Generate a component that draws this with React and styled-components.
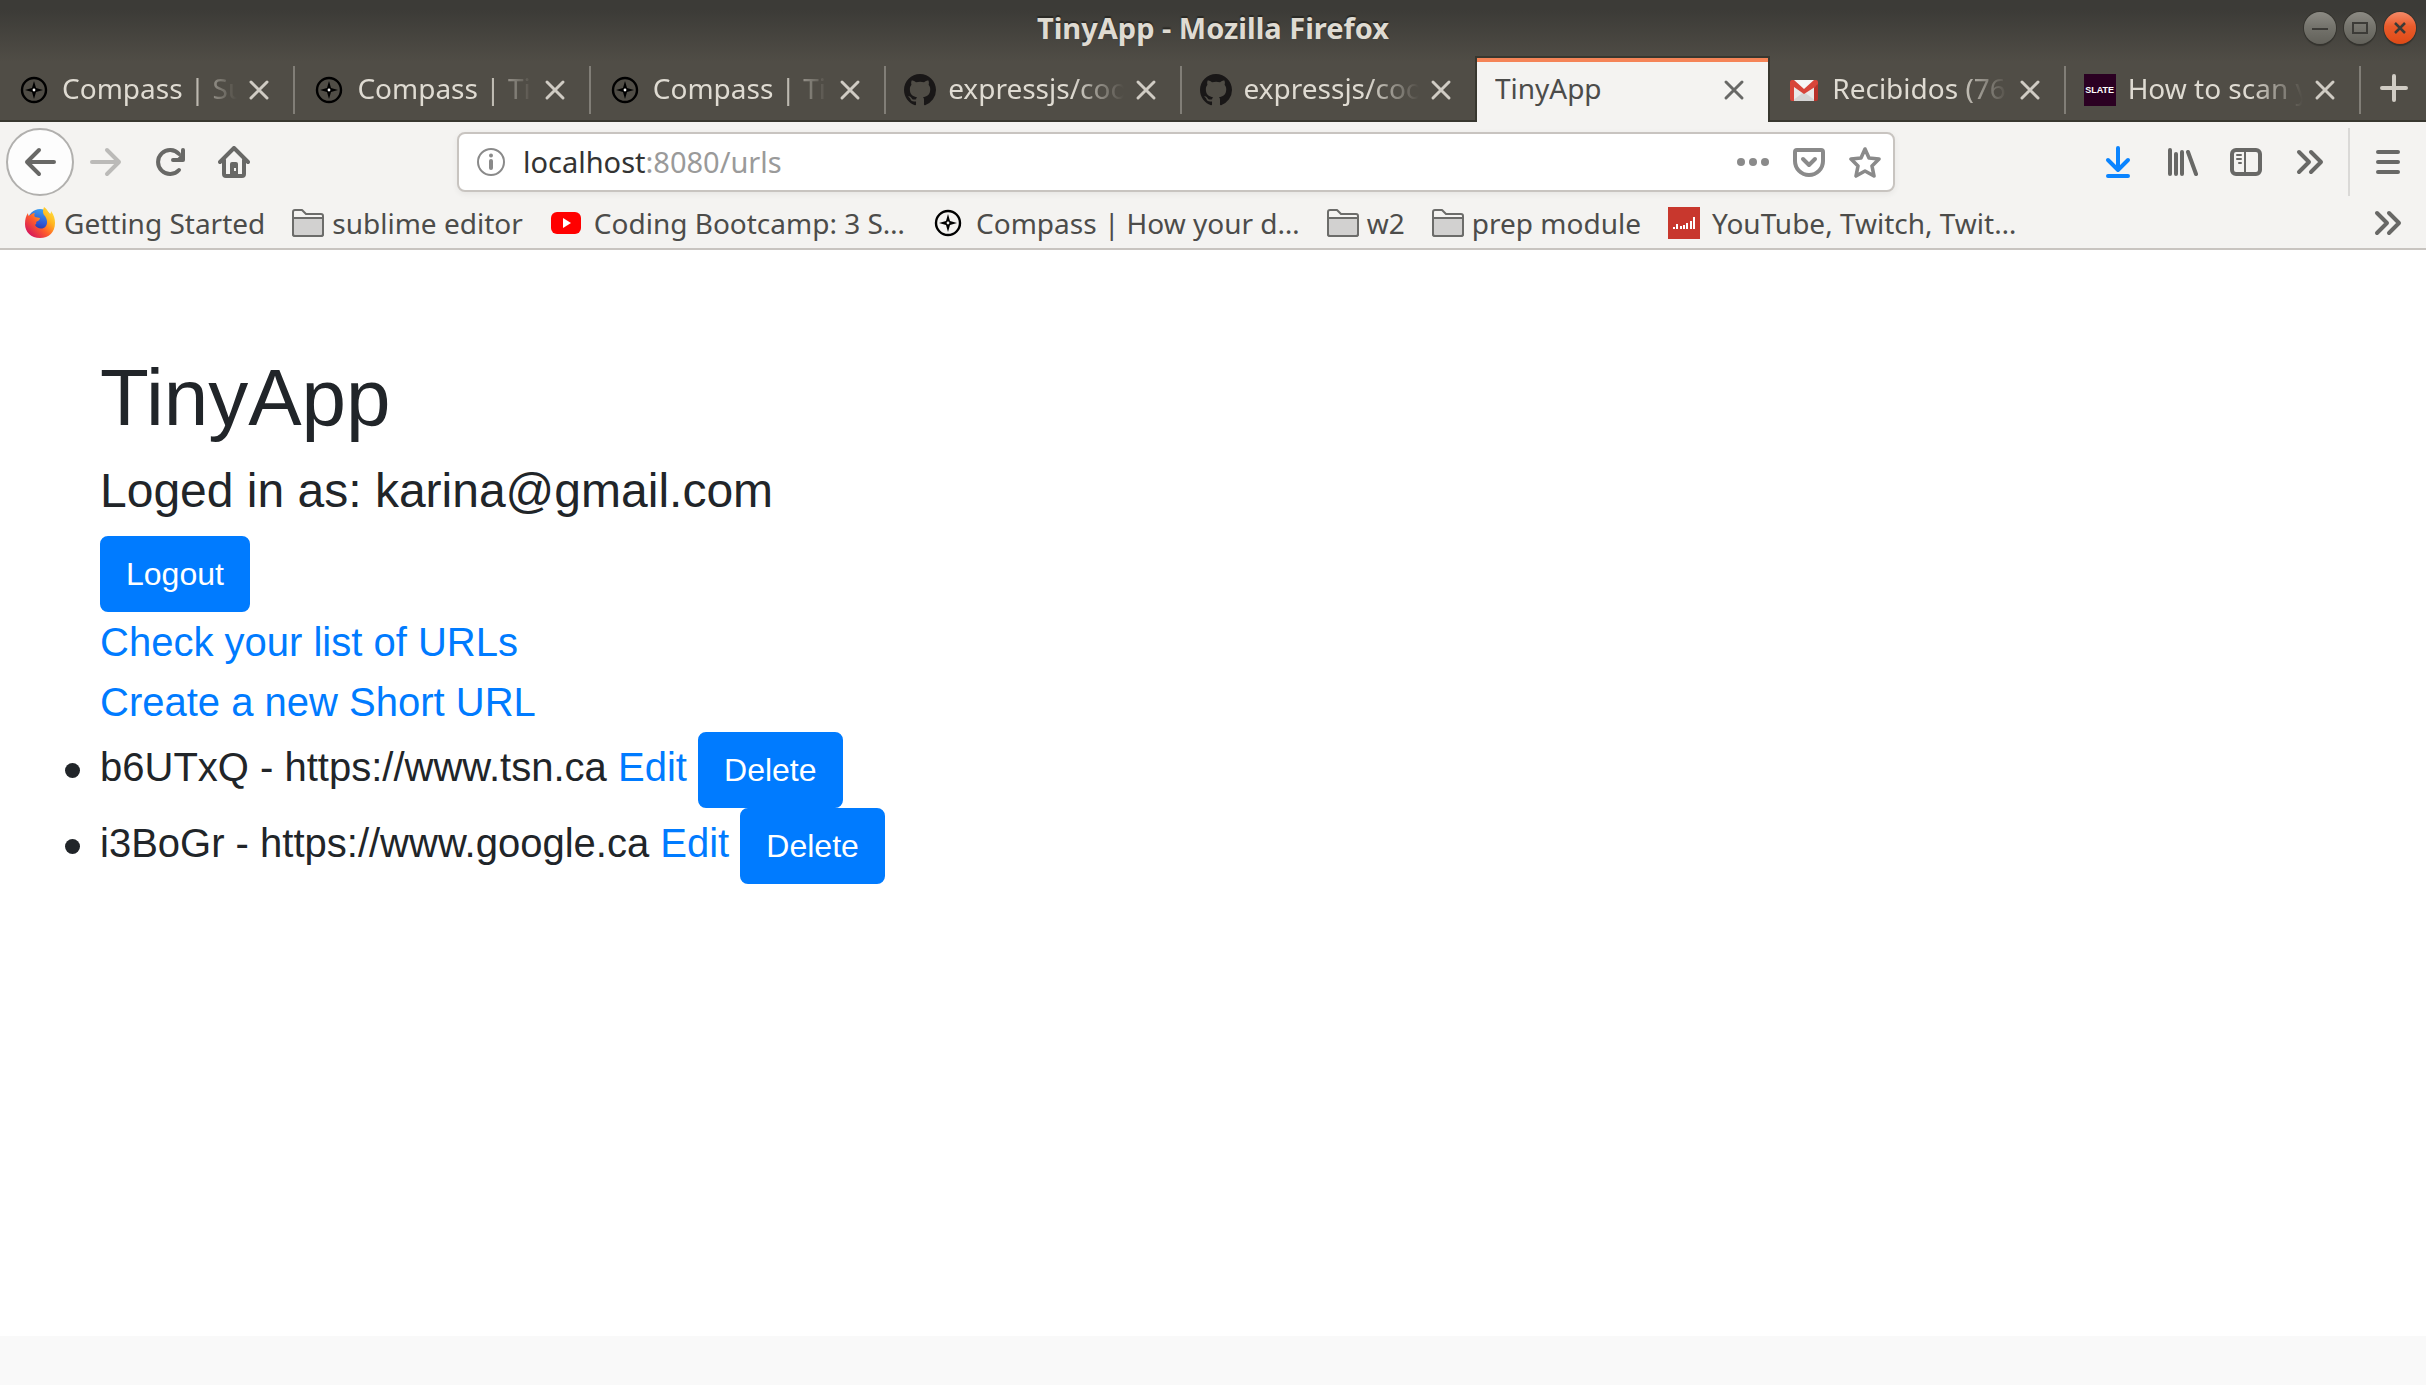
import React from "react";
import styled, { createGlobalStyle, css } from "styled-components";

const uiFont = '"Noto Sans", "Open Sans", sans-serif';
const pageFont = '"Liberation Sans", Arial, sans-serif';
const chrome = "#f4f3f1";
const frame = "#38372f";
const glyph = "#686866";
const blue = "#007bff";

const GlobalStyle = createGlobalStyle`
  *, *::before, *::after { box-sizing: border-box; }
  body { margin: 0; background: #fff; }
  button, input { font: inherit; color: inherit; margin: 0; padding: 0; border: 0; background: none; }
  button { cursor: pointer; }
`;

const Window = styled.div`
  min-height: 100vh;
  display: flex;
  flex-direction: column;
`;

/* ---------- window frame ---------- */

const Frame = styled.div`
  background: linear-gradient(to bottom, #3c3b37 0, #3c3b37 10px, #504d46 62px);
  color: #dfdbd2;
  font-family: ${uiFont};
`;

const TitleBar = styled.div`
  height: 56px;
  padding: 0 10px;
  display: grid;
  grid-template-columns: 1fr auto 1fr;
  align-items: center;
`;

const WindowTitle = styled.div`
  grid-column: 2;
  font-size: 29px;
  font-weight: 700;
  line-height: 40px;
  text-shadow: 0 -2px 1px #2a2925;
`;

const WindowButtons = styled.div`
  display: flex;
  justify-content: flex-end;
  gap: 8px;
`;

const WindowButton = styled.button`
  width: 32px;
  height: 32px;
  border-radius: 50%;
  color: #3c3b37;
  background: ${(p) =>
    p.$close
      ? "linear-gradient(#f58a68, #e95b2b 45%, #df4a16)"
      : "linear-gradient(#8d8b84, #75746d 45%, #62615a)"};
  box-shadow: 0 0 0 1px #35342f, 0 2px 1px #35342f;

  svg { display: block; }
`;

const TabStrip = styled.div`
  display: flex;
  height: 66px;
`;

const Tab = styled.div`
  flex: 1 1 100px;
  min-width: 0;
  display: flex;
  align-items: center;
  padding: 4px 0 0 18px;
  border-bottom: 2px solid ${frame};
  font-size: 28px;
  line-height: 40px;
  ${(p) =>
    p.$active &&
    css`
      position: relative;
      margin-left: -2px;
      padding: 0 0 0 18px;
      border: 2px solid ${frame};
      border-bottom: 0;
      background: linear-gradient(#f58457 4px, ${chrome} 4px);
      color: #4c4c4a;
    `}
`;

const TabIcon = styled.span`
  flex: none;
  width: 32px;
  height: 32px;
  margin-right: 12px;

  svg { display: block; }
`;

const TabLabel = styled.button`
  flex: 1 1 0;
  min-width: 0;
  margin-right: 6px;
  padding-bottom: 4px;
  overflow: hidden;
  text-align: left;
  white-space: nowrap;
  mask-image: ${(p) =>
    p.$fade ? "linear-gradient(to left, transparent, #000 52px)" : "none"};
`;

const TabClose = styled.button`
  flex: none;
  width: 32px;
  height: 32px;
  margin-right: 18px;
  color: ${(p) => (p.$active ? glyph : "#d0ccc4")};

  svg { display: block; }
`;

const TabDivider = styled.span`
  flex: none;
  width: 2px;
  height: 48px;
  background: ${(p) => (p.$hidden ? "transparent" : "#817e77")};
`;

const NewTab = styled.button`
  width: 65px;
  border-bottom: 2px solid ${frame};
  color: #d0ccc4;
  display: grid;
  place-items: center;
`;

const SlateMark = styled.span`
  display: grid;
  place-items: center;
  width: 32px;
  height: 32px;
  background: #2b0022;
  color: #fff;
  font: 700 9px/32px ${pageFont};
`;

/* ---------- toolbars ---------- */

const NavBar = styled.div`
  display: flex;
  align-items: center;
  height: 80px;
  padding-left: 6px;
  background: ${chrome};
  color: ${glyph};
  font-family: ${uiFont};
`;

const ToolButton = styled.button`
  flex: none;
  width: 64px;
  height: 68px;
  display: grid;
  place-items: center;
  color: ${(p) => p.$tint || "inherit"};
`;

const BackButton = styled(ToolButton)`
  width: 68px;
  border: 2px solid #b1b0ae;
  border-radius: 50%;
  background: #fdfdfd;
`;

const MenuButton = styled(ToolButton)`
  width: 78px;
  margin-left: 6px;
  border-left: 2px solid #dad9d7;
`;

const Spacer = styled.span`
  flex: 191 1 191px;
`;

const AddressBar = styled.div`
  flex: 1438 1 1438px;
  min-width: 0;
  height: 60px;
  display: flex;
  align-items: center;
  padding: 0 12px 0 16px;
  border: 2px solid #c8c4c0;
  border-radius: 8px;
  background: #fff;
  box-shadow: 0 2px 6px rgba(0, 0, 0, 0.06);
  color: #8a8a8a;
  font-size: 29px;
  line-height: 40px;

  > svg { flex: none; margin-right: 16px; }
`;

const HostInput = styled.input`
  field-sizing: content;
  height: 40px;
  color: #333;
  outline: none;
`;

const UrlPath = styled.span`
  flex: 1;
  color: #9a9a9a;
`;

const PageActions = styled.div`
  display: flex;
  gap: 24px;

  button { display: block; width: 32px; height: 32px; }
  svg { display: block; }
`;

const BookmarksBar = styled.nav`
  display: flex;
  align-items: center;
  height: 48px;
  padding: 0 22px 4px 24px;
  gap: 27px;
  border-bottom: 2px solid #c8c4c0;
  background: ${chrome};
  color: #4c4c4a;
  font-family: ${uiFont};
  font-size: 28px;
  line-height: 40px;
`;

const Bookmark = styled.a`
  display: flex;
  align-items: center;
  gap: ${(p) => (p.$tight ? 8 : 12)}px;
  color: inherit;
  text-decoration: none;
  white-space: nowrap;

  svg { flex: none; }
`;

const BookmarksOverflow = styled.button`
  margin-left: auto;
  color: ${glyph};

  svg { display: block; }
`;

/* ---------- page ---------- */

const Page = styled.main`
  flex: 1;
  padding: 100px;
  background: #fff;
  color: #212529;
  font-family: ${pageFont};
  font-size: 40px;
  line-height: 60px;
`;

const Heading = styled.h1`
  margin: 0 0 16px;
  font-size: 80px;
  font-weight: 400;
  line-height: 96px;
`;

const Account = styled.h4`
  margin: 0 0 16px;
  font-size: 48px;
  font-weight: 400;
  line-height: 58px;
`;

const Button = styled.button`
  padding: 12px 24px;
  border: 2px solid ${blue};
  border-radius: 8px;
  background: ${blue};
  color: #fff;
  font-size: 32px;
  line-height: 48px;
  vertical-align: middle;
`;

const LogoutForm = styled.form`
  display: flex;
`;

const Link = styled.a`
  color: ${blue};
  text-decoration: none;
`;

const PageLink = styled(Link)`
  display: block;
  width: fit-content;
`;

const UrlList = styled.ul`
  margin: 0;
  padding: 0;
  list-style: none;
`;

const UrlItem = styled.li`
  &::before {
    content: "";
    display: inline-block;
    width: 15px;
    height: 15px;
    margin: 0 20px 0 -35px;
    border-radius: 50%;
    background: currentColor;
    vertical-align: middle;
  }
`;

const Footer = styled.footer`
  height: 49px;
  background: #f9f9f9;
`;

/* ---------- icons ---------- */

const Icon = ({ children, size = 32, ...rest }) => (
  <svg
    width={size}
    height={size}
    viewBox="0 0 32 32"
    fill="none"
    stroke="currentColor"
    strokeWidth="4"
    strokeLinecap="round"
    strokeLinejoin="round"
    aria-hidden="true"
    {...rest}
  >
    {children}
  </svg>
);

const CloseIcon = () => (
  <Icon strokeWidth="3">
    <path d="M8 8 24 24M24 8 8 24" />
  </Icon>
);

const ChevronsIcon = () => (
  <Icon>
    <path d="M5 6 15 16 5 26M17 6 27 16 17 26" />
  </Icon>
);

const CompassIcon = () => (
  <Icon strokeWidth="2.4" stroke="#000">
    <circle cx="16" cy="16" r="12" />
    <path
      d="M16 7 18 14 25 16 18 18 16 25 14 18 7 16 14 14Z"
      fill="#000"
      stroke="none"
    />
    <circle cx="16" cy="16" r="1.4" fill="#f4f3f1" stroke="none" />
  </Icon>
);

const GithubIcon = () => (
  <svg width="32" height="32" viewBox="0 0 16 16" aria-hidden="true">
    <path
      fill="#191717"
      d="M8 0C3.58 0 0 3.58 0 8c0 3.54 2.29 6.53 5.47 7.59.4.07.55-.17.55-.38 0-.19-.01-.82-.01-1.49-2.01.37-2.53-.49-2.69-.94-.09-.23-.48-.94-.82-1.13-.28-.15-.68-.52-.01-.53.63-.01 1.08.58 1.23.82.72 1.21 1.87.87 2.33.66.07-.52.28-.87.51-1.07-1.78-.2-3.64-.89-3.64-3.95 0-.87.31-1.59.82-2.15-.08-.2-.36-1.02.08-2.12 0 0 .67-.21 2.2.82.64-.18 1.32-.27 2-.27s1.36.09 2 .27c1.53-1.04 2.2-.82 2.2-.82.44 1.1.16 1.92.08 2.12.51.56.82 1.27.82 2.15 0 3.07-1.87 3.75-3.65 3.95.29.25.54.73.54 1.48 0 1.07-.01 1.93-.01 2.2 0 .21.15.46.55.38A8.01 8.01 0 0 0 16 8c0-4.42-3.58-8-8-8z"
    />
  </svg>
);

const GmailIcon = () => (
  <svg width="32" height="32" viewBox="0 0 32 32" aria-hidden="true">
    <path fill="#e9e9e9" d="M4 6h24v21H4z" />
    <path fill="#d5d5d5" d="M16 18 28 27H4z" />
    <path fill="#f6f6f6" d="M6 6h20L16 15z" />
    <path
      fill="#d8453a"
      d="M2 8a2 2 0 0 1 2-2h2l10 9 10-9h2a2 2 0 0 1 2 2v3L16 20 6 13v14H4a2 2 0 0 1-2-2z"
    />
    <path fill="#b8322a" d="M26 13.500 30 10v15a2 2 0 0 1-2 2h-2z" />
  </svg>
);

const FolderIcon = () => (
  <Icon strokeWidth="2" stroke="#6c6c6a">
    <path
      fill="#f4f3f1"
      d="M1 5a2 2 0 0 1 2-2h7l4 4h15a2 2 0 0 1 2 2v18a2 2 0 0 1-2 2H3a2 2 0 0 1-2-2z"
    />
    <path fill="#d2d1d0" d="M1 11h30v16a2 2 0 0 1-2 2H3a2 2 0 0 1-2-2z" />
  </Icon>
);

const FirefoxIcon = () => (
  <svg width="32" height="32" viewBox="0 0 32 32" aria-hidden="true">
    <defs>
      <linearGradient id="fox" x1="1" y1="0" x2="0.1" y2="0.9">
        <stop offset="0" stopColor="#fff24a" />
        <stop offset="0.35" stopColor="#ffb520" />
        <stop offset="0.62" stopColor="#ff5d2b" />
        <stop offset="1" stopColor="#d3125f" />
      </linearGradient>
      <linearGradient id="globe" x1="0.7" y1="0" x2="0.4" y2="1">
        <stop offset="0" stopColor="#3da6f2" />
        <stop offset="0.6" stopColor="#2f55d4" />
        <stop offset="1" stopColor="#2b2a86" />
      </linearGradient>
    </defs>
    <circle cx="16" cy="14" r="12" fill="url(#globe)" />
    <path
      fill="url(#fox)"
      d="M20 0c4 3 4 5 6 7 1-1 1-2 1-3 3 4 4 8 4 12 0 9-6 15-15 15S1 25 1 17c0-5 1-8 3-11 0 1 0 2 1 3 2-2 4-3 6-3-1 1-1 3 0 4l5 1c0 2-2 3-4 4 1 1 0 2-1 3 2 4 8 5 11 1 2-3 1-7-1-10-3-3-2-6-1-9z"
    />
  </svg>
);

const YoutubeIcon = () => (
  <svg width="32" height="32" viewBox="0 0 32 32" aria-hidden="true">
    <rect x="1" y="5" width="30" height="22" rx="6" fill="#f00" />
    <path fill="#fff" d="m13 11 8 5-8 5z" />
  </svg>
);

const StatsIcon = () => (
  <svg width="32" height="32" viewBox="0 0 32 32" aria-hidden="true">
    <path fill="#c8372d" d="M0 0h32v32H0z" />
    <path
      stroke="#fff"
      strokeWidth="2"
      d="M6 22v-2M9 22v-5M13 22v-3M16 22v-4M19 22v-6M23 22v-8M26 22V10"
    />
  </svg>
);

/* ---------- data ---------- */

const tabs = [
  { title: "Compass | Su", icon: <CompassIcon /> },
  { title: "Compass | Tin", icon: <CompassIcon /> },
  { title: "Compass | Tin", icon: <CompassIcon /> },
  { title: "expressjs/coo", icon: <GithubIcon /> },
  { title: "expressjs/coo", icon: <GithubIcon />, beforeActive: true },
  { title: "TinyApp", active: true },
  { title: "Recibidos (76", icon: <GmailIcon /> },
  { title: "How to scan y", icon: <SlateMark>SLATE</SlateMark> },
];

const bookmarks = [
  { title: "Getting Started", icon: <FirefoxIcon />, tight: true },
  { title: "sublime editor", icon: <FolderIcon />, tight: true },
  { title: "Coding Bootcamp: 3 S…", icon: <YoutubeIcon /> },
  { title: "Compass | How your d…", icon: <CompassIcon /> },
  { title: "w2", icon: <FolderIcon />, tight: true },
  { title: "prep module", icon: <FolderIcon />, tight: true },
  { title: "YouTube, Twitch, Twit…", icon: <StatsIcon /> },
];

const urls = [
  { id: "b6UTxQ", target: "https://www.tsn.ca" },
  { id: "i3BoGr", target: "https://www.google.ca" },
];

export default function App() {
  return (
    <Window>
      <GlobalStyle />
      <Frame>
        <TitleBar>
          <WindowTitle>TinyApp - Mozilla Firefox</WindowTitle>
          <WindowButtons>
            <WindowButton aria-label="Minimize">
              <Icon strokeWidth="2" strokeLinecap="butt">
                <path d="M8 17h16" />
              </Icon>
            </WindowButton>
            <WindowButton aria-label="Maximize">
              <Icon strokeWidth="2" strokeLinejoin="miter">
                <path d="M9 11h14v10H9z" />
              </Icon>
            </WindowButton>
            <WindowButton $close aria-label="Close window">
              <Icon strokeWidth="2.500" strokeLinecap="butt">
                <path d="m11 11 10 10M21 11 11 21" />
              </Icon>
            </WindowButton>
          </WindowButtons>
        </TitleBar>
        <TabStrip>
          {tabs.map((tab, i) => (
            <Tab key={i} $active={tab.active}>
              {tab.icon && <TabIcon>{tab.icon}</TabIcon>}
              <TabLabel $fade={!tab.active}>{tab.title}</TabLabel>
              <TabClose $active={tab.active} aria-label="Close tab">
                <CloseIcon />
              </TabClose>
              {!tab.active && <TabDivider $hidden={tab.beforeActive} />}
            </Tab>
          ))}
          <NewTab aria-label="New tab">
            <Icon>
              <path d="M16 4v24M4 16h24" />
            </Icon>
          </NewTab>
        </TabStrip>
      </Frame>

      <NavBar>
        <BackButton aria-label="Back">
          <Icon>
            <path d="M30 16H3M15 4 3 16l12 12" />
          </Icon>
        </BackButton>
        <ToolButton $tint="#bbbab8" aria-label="Forward">
          <Icon>
            <path d="M2 16h27M17 4l12 12-12 12" />
          </Icon>
        </ToolButton>
        <ToolButton aria-label="Reload">
          <Icon>
            <path d="M25 24A12 12 0 1 1 25 8" />
            <path d="M29 4v10H19" />
            <path d="m29 6-7 8h7z" fill="currentColor" stroke="none" />
          </Icon>
        </ToolButton>
        <ToolButton aria-label="Home">
          <Icon>
            <path d="M2 16 16 2l14 14" />
            <path d="M6 14v14a2 2 0 0 0 2 2h16a2 2 0 0 0 2-2V14" />
            <path
              d="M12 30V18a2 2 0 0 1 2-2h4a2 2 0 0 1 2 2v12z"
              fill="currentColor"
              stroke="none"
            />
            <path d="M16 22h2v3h-2z" fill="#f4f3f1" stroke="none" />
          </Icon>
        </ToolButton>
        <Spacer />
        <AddressBar>
          <Icon strokeWidth="2">
            <circle cx="16" cy="16" r="13" />
            <path d="M16 15v7" strokeWidth="4" />
            <path d="M16 9.500v0" strokeWidth="4" />
          </Icon>
          <HostInput aria-label="Address" defaultValue="localhost" />
          <UrlPath>:8080/urls</UrlPath>
          <PageActions>
            <button aria-label="Page actions">
              <Icon fill="currentColor" stroke="none">
                <circle cx="4" cy="16" r="4" />
                <circle cx="16" cy="16" r="4" />
                <circle cx="28" cy="16" r="4" />
              </Icon>
            </button>
            <button aria-label="Save to Pocket">
              <Icon>
                <path d="M4 4h24a2 2 0 0 1 2 2v9a14 14 0 0 1-28 0V6a2 2 0 0 1 2-2z" />
                <path d="m10 13 6 6 6-6" />
              </Icon>
            </button>
            <button aria-label="Bookmark this page">
              <Icon strokeWidth="3.600">
                <path d="m16 3 4 9 10 1-7 7 2 10-9-5-9 5 2-10-7-7 10-1z" />
              </Icon>
            </button>
          </PageActions>
        </AddressBar>
        <Spacer />
        <ToolButton $tint="#0a84ff" aria-label="Downloads">
          <Icon>
            <path d="M16 2v22M6 14l10 10 10-10M6 30h20" />
          </Icon>
        </ToolButton>
        <ToolButton aria-label="Library">
          <Icon>
            <path d="M4 4v24M10 8v20M16 6v22M22 6l8 22" />
          </Icon>
        </ToolButton>
        <ToolButton aria-label="Sidebars">
          <Icon>
            <rect x="2" y="4" width="28" height="24" rx="4" />
            <path d="M15 4v24" strokeWidth="2" />
            <path d="M7 9h4M7 13h4M9 17h2" strokeWidth="2" />
          </Icon>
        </ToolButton>
        <ToolButton aria-label="More tools">
          <ChevronsIcon />
        </ToolButton>
        <MenuButton aria-label="Open menu">
          <Icon>
            <path d="M6 6h20M6 16h20M6 26h20" />
          </Icon>
        </MenuButton>
      </NavBar>

      <BookmarksBar>
        {bookmarks.map((b) => (
          <Bookmark key={b.title} href="#" $tight={b.tight}>
            {b.icon}
            <span>{b.title}</span>
          </Bookmark>
        ))}
        <BookmarksOverflow aria-label="More bookmarks">
          <ChevronsIcon />
        </BookmarksOverflow>
      </BookmarksBar>

      <Page>
        <Heading>TinyApp</Heading>
        <Account>Loged in as: karina@gmail.com</Account>
        <LogoutForm>
          <Button type="button">Logout</Button>
        </LogoutForm>
        <PageLink href="#">Check your list of URLs</PageLink>
        <PageLink href="#">Create a new Short URL</PageLink>
        <UrlList>
          {urls.map((u) => (
            <UrlItem key={u.id}>
              {u.id} - {u.target} <Link href="#">Edit</Link>{" "}
              <Button type="button">Delete</Button>
            </UrlItem>
          ))}
        </UrlList>
      </Page>
      <Footer />
    </Window>
  );
}
